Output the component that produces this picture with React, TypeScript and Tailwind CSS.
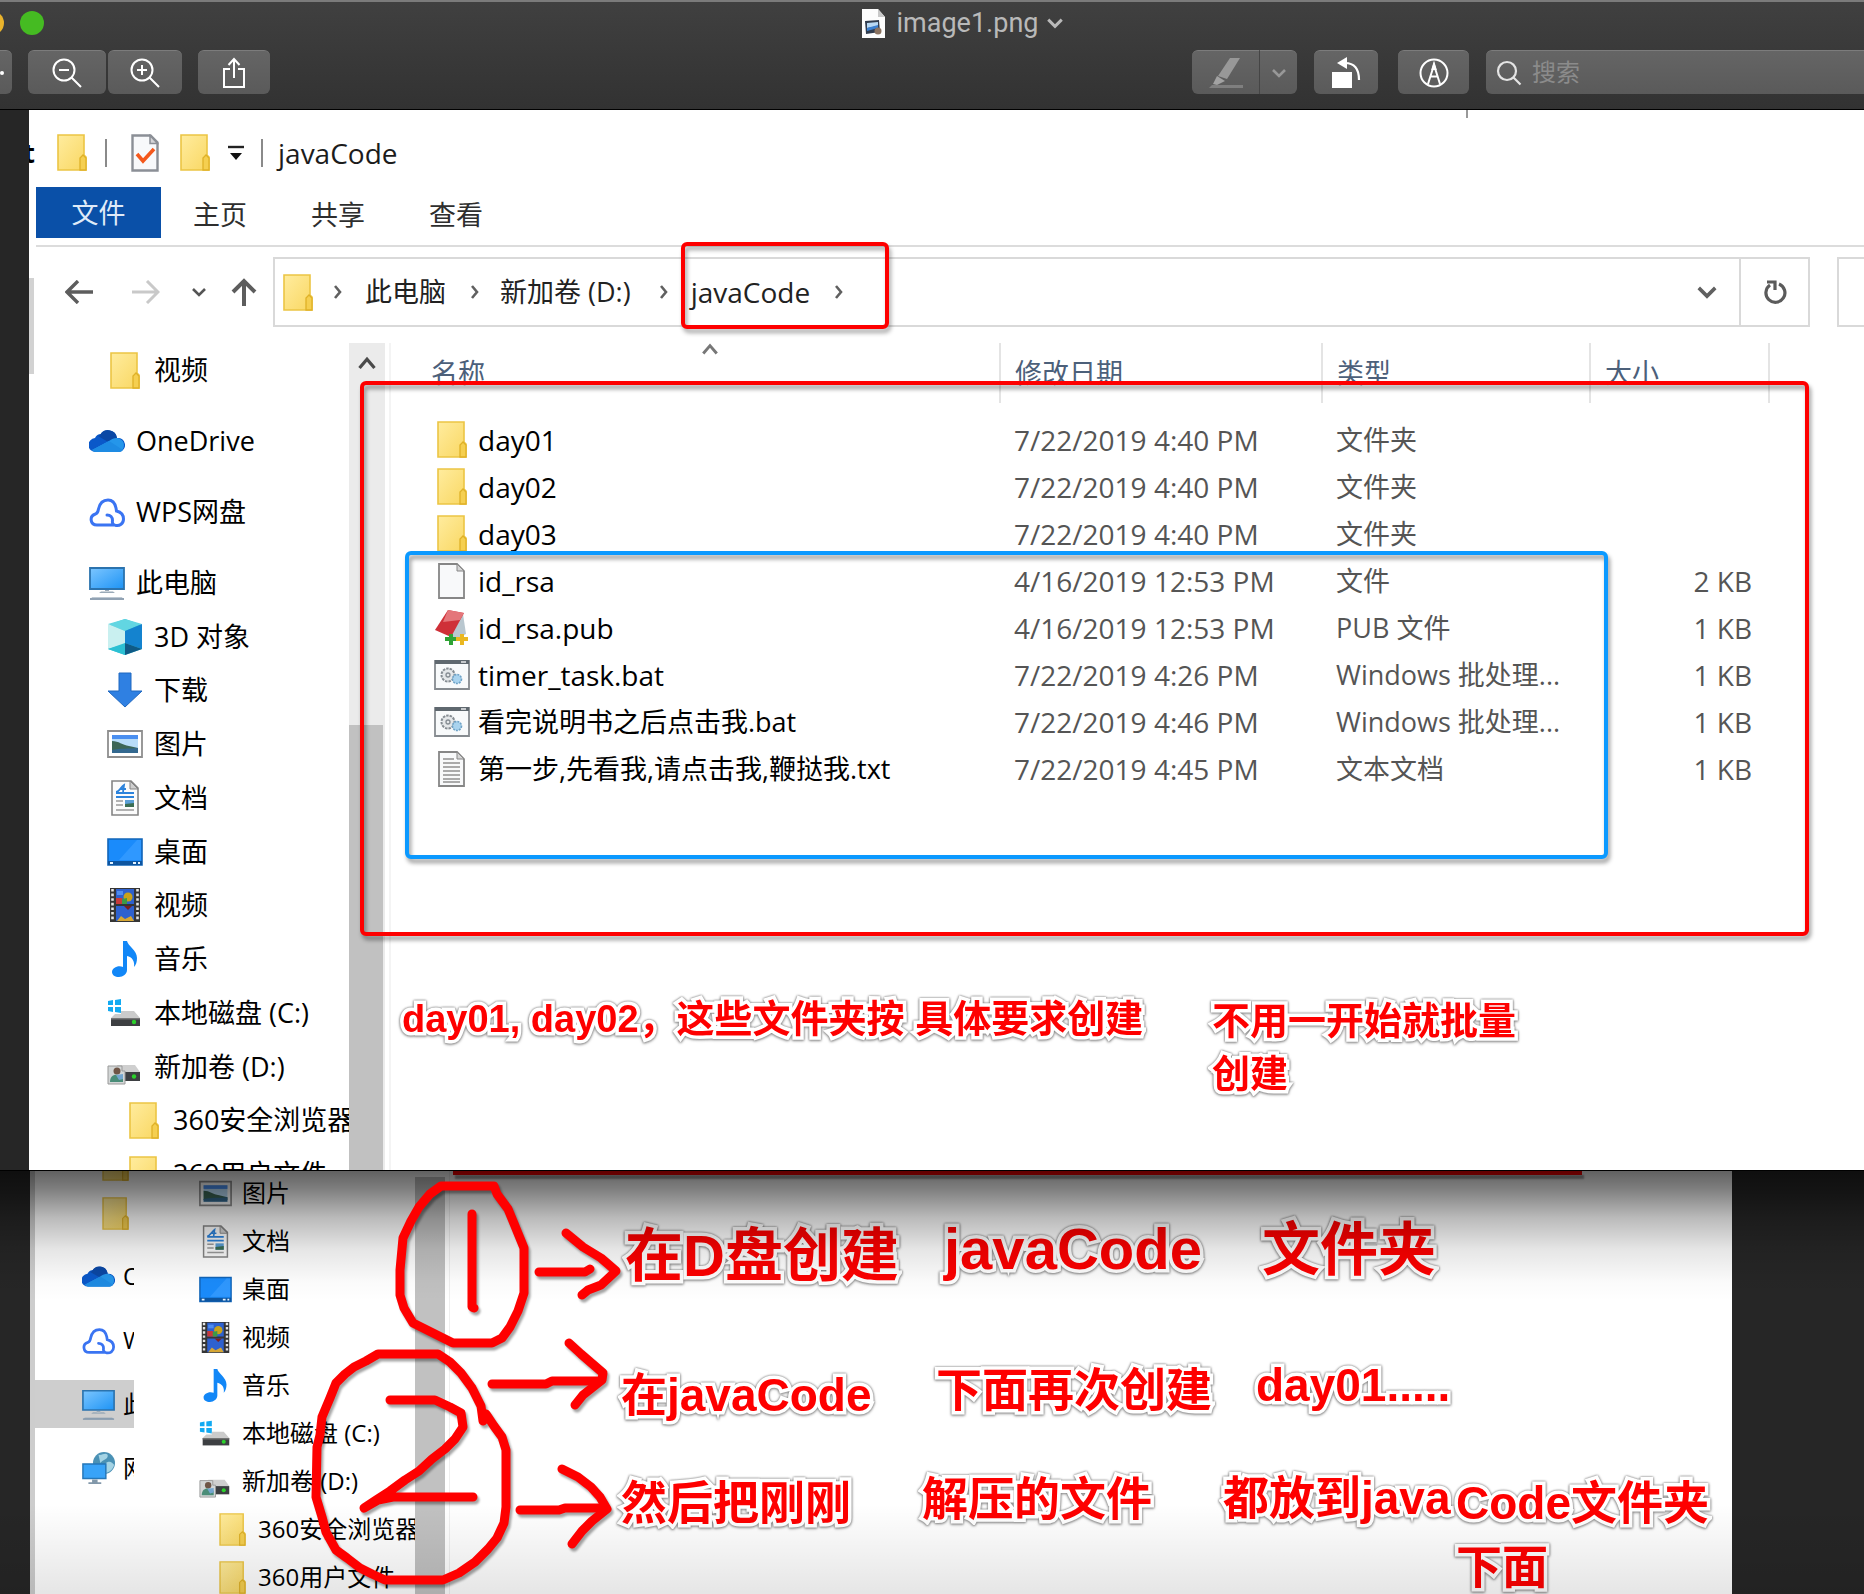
import React from "react";

type IconProps = { className?: string };

const Folder = ({ className = "w-[30px] h-[37px]" }: IconProps) => (
  <svg viewBox="0 0 30 37" className={className} aria-hidden="true">
    <defs>
      <linearGradient id="folderFill" x1="0" y1="0" x2="1" y2="1">
        <stop offset="0" stopColor="#ffec9e" />
        <stop offset="1" stopColor="#f9d762" />
      </linearGradient>
    </defs>
    <path d="M1 1h26v20l2 2v13H1z" fill="url(#folderFill)" stroke="#ecc544" strokeWidth="1.6" />
    <path d="M23 36V24l3-3 3 3v12z" fill="#f5cf50" stroke="#dfb127" strokeWidth="1.3" />
  </svg>
);

const CheckDoc = () => (
  <svg viewBox="0 0 28 38" className="h-[38px] w-7" aria-hidden="true">
    <path d="M1.5 1.5h18l7 7v28h-25z" fill="#f8f9fb" stroke="#8b8f96" strokeWidth="2.4" />
    <path d="M19 1.5v8h7.500z" fill="#d5d5d8" stroke="#8b8f96" strokeWidth="1.5" />
    <path d="M6 20l6 7 11-12" fill="none" stroke="#f4581c" strokeWidth="3.600" />
  </svg>
);

const OneDrive = ({ className = "w-9 h-9" }: IconProps) => (
  <svg viewBox="0 0 36 36" className={className} aria-hidden="true">
    <path d="M7 29a7 7 0 0 1-1-14 7 7 0 0 1 6-4 9 9 0 0 1 16 4 7 7 0 0 1 2 14z" fill="#0a58c9" />
    <path d="M11 12a9 9 0 0 1 17 3l-7 5-12-7z" fill="#0b48a5" />
    <path d="M3 27l17-9c4-3 8-4 11-2a7 7 0 0 1-1 13H8c-2 0-4-1-5-2z" fill="#2596ea" />
    <path d="M3 27l17-9 14 9c-1 1-2 2-4 2H8c-2 0-4-1-5-2z" fill="#1e8be3" />
  </svg>
);

const WpsCloud = ({ className = "w-9 h-9" }: IconProps) => (
  <svg viewBox="0 0 36 36" className={className} aria-hidden="true">
    <path
      d="M24 31H8c-7 0-8-9-1.500-11 2-.5 2.500-2 3-5C11 8 15 6 19 6s7 3 8 8l.500 3c4 1 7 4 7 8 0 5-4 7-7.500 6.500-3-.5-4-2.500-3.500-5 0-3-2-5.500-5.500-5.500"
      fill="none"
      stroke="#3a74f2"
      strokeWidth="3"
      strokeLinecap="round"
    />
  </svg>
);

const Computer = ({ className = "w-9 h-9" }: IconProps) => (
  <svg viewBox="0 0 36 36" className={className} aria-hidden="true">
    <defs>
      <linearGradient id="screenFill" x1="0" y1="0" x2="1" y2="1">
        <stop offset="0" stopColor="#7cc6ff" />
        <stop offset="1" stopColor="#1d93f5" />
      </linearGradient>
    </defs>
    <path d="M1 3h34v21H1z" fill="url(#screenFill)" stroke="#2b73ae" strokeWidth="1.800" />
    <path d="M10 28h16l-2-1.500H12zM16 25h4v2h-4z" fill="#9aaab8" />
    <path d="M1 34.500l2-2h30l2 2z" fill="#7e93a8" />
    <path d="M1 34h34" stroke="#91a2b3" strokeWidth="2" />
  </svg>
);

const Cube = () => (
  <svg viewBox="0 0 36 36" className="h-9 w-9" aria-hidden="true">
    <path d="M18 0l17 6v24l-17 6-17-6V6z" fill="#38c3d6" />
    <path d="M1 5l17-5 17 5-17 7z" fill="#62d6e2" />
    <path d="M1 5l17 7v13L1 30z" fill="#c9f0f0" />
    <path d="M18 12L35 5v25l-17-6z" fill="#1483cf" />
    <path d="M18 24l17 6-17 6z" fill="#0f5a86" />
    <path d="M18 24v12L1 30z" fill="#2cc0d3" />
  </svg>
);

const Download = () => (
  <svg viewBox="0 0 36 36" className="h-9 w-9" aria-hidden="true">
    <path d="M12 1h12v18h11L18 35 1 19h11z" fill="#2f80e2" stroke="#2068c0" strokeWidth="1" />
  </svg>
);

const Picture = ({ className = "w-9 h-9" }: IconProps) => (
  <svg viewBox="0 0 36 36" className={className} aria-hidden="true">
    <path d="M1 5h34v26H1z" fill="#fff" stroke="#8e8e8e" strokeWidth="1.800" />
    <path d="M5 9h26v18H5z" fill="#b8dcf8" />
    <path d="M5 9h26v4H5z" fill="#4a8ff0" />
    <path d="M5 15c7 0 10 4 17 5l9 2v3H5z" fill="#3c6656" />
    <path d="M5 24c8-2 16-1 26-2v5H5z" fill="#33688f" />
  </svg>
);

const Document = ({ className = "w-9 h-9" }: IconProps) => (
  <svg viewBox="0 0 36 36" className={className} aria-hidden="true">
    <path d="M5 1h19l7 7v27H5z" fill="#fbfbfb" stroke="#858585" strokeWidth="1.600" />
    <path d="M23 1v8h8z" fill="#cfcfcf" stroke="#858585" />
    <path d="M9 12c3 0 5-5 8-7l-1 7m-3-3h6" fill="none" stroke="#2c83dc" strokeWidth="1.800" />
    <path d="M9 13h18M9 17h18" stroke="#2c83dc" strokeWidth="2" />
    <path d="M9 21h7M9 25h7M9 30h18" stroke="#9b9b9b" strokeWidth="1.600" />
    <path d="M18 20h9v7h-9z" fill="#5b9fd6" />
    <path d="M18 24l9-1v4h-9z" fill="#3b6e53" />
  </svg>
);

const Desktop = ({ className = "w-9 h-9" }: IconProps) => (
  <svg viewBox="0 0 36 36" className={className} aria-hidden="true">
    <path d="M1 5h34v26H1z" fill="#1a8bfb" stroke="#1265b8" strokeWidth="1.600" />
    <path d="M12 26L30 6h4v20z" fill="#2f98ff" />
    <path d="M1 27h34v4H1z" fill="#0d55a0" />
    <path d="M3 29h3M26 29h3M31 29h2" stroke="#e5f3ff" strokeWidth="1.800" />
  </svg>
);

const Film = ({ className = "w-9 h-9" }: IconProps) => (
  <svg viewBox="0 0 36 36" className={className} aria-hidden="true">
    <path d="M3 1h30v34H3z" fill="#353535" />
    <path d="M5.500 2v32M30.500 2v32" stroke="#e6e6e6" strokeWidth="2.600" strokeDasharray="2.600 2" />
    <path d="M9 2h18v15H9zM9 19h18v15H9z" fill="#2e61cf" />
    <circle cx="21" cy="10" r="4.500" fill="#c9a21a" />
    <path d="M9 11h6l4 6H9z" fill="#c83a3a" />
    <path d="M15 12l5-1v6h-5z" fill="#3c9a48" />
    <path d="M17 19h8l-4 4z" fill="#7d1f1f" />
    <path d="M10 34l4-5 4 3 6-3 3 5z" fill="#d6a634" />
    <path d="M10 4h6v4h-6z" fill="#4f8df0" />
  </svg>
);

const Note = ({ className = "w-9 h-9" }: IconProps) => (
  <svg viewBox="0 0 36 36" className={className} aria-hidden="true">
    <path
      d="M16 0h4c1 5 10 9 10 17 0 4-1 7-3 9 1-6-2-10-7-11v14c0 4-4 7-8 7s-7-2-7-5c0-4 6-7 11-5z"
      fill="#1287f7"
    />
  </svg>
);

const DriveC = ({ className = "w-9 h-9" }: IconProps) => (
  <svg viewBox="0 0 36 36" className={className} aria-hidden="true">
    <path d="M1 6l5-1v5H1zM8 5l6-1v6H8zM1 12h5v5l-5-1zM8 12h6v6l-6-1z" fill="#12aaf2" />
    <path d="M14 16h13l6 7H4l4-4h6z" fill="#cbcbcb" />
    <path d="M4 23h29v8H4z" fill="#3d3f42" />
    <path d="M4 23h29v1.500H4z" fill="#777" />
    <circle cx="27" cy="27" r="2.200" fill="#2bd12b" />
  </svg>
);

const DriveD = ({ className = "w-9 h-9" }: IconProps) => (
  <svg viewBox="0 0 36 36" className={className} aria-hidden="true">
    <path d="M10 16h18l5 7H13z" fill="#cfcfcf" />
    <path d="M13 23h20v9H13z" fill="#3d3f42" />
    <circle cx="27" cy="27.500" r="2.200" fill="#2bd12b" />
    <path d="M1 17h14v5h3v13H1z" fill="#d3d6d6" stroke="#999" />
    <circle cx="10" cy="22" r="3.500" fill="#6f5546" />
    <path d="M3 33c0-6 4-8 8-7l5 2v5z" fill="#4a8d78" />
    <path d="M9 26l7-1v5l-4 1z" fill="#74a6cf" />
  </svg>
);

const Network = ({ className = "w-9 h-9" }: IconProps) => (
  <svg viewBox="0 0 36 36" className={className} aria-hidden="true">
    <circle cx="24" cy="12" r="12" fill="#4a91b5" />
    <path d="M18 3c4 1 7-3 10 0 1 5-5 5-8 9zM26 12c4-3 7-1 9 2-1 5-5 8-9 9z" fill="#a4d3e4" />
    <path d="M1 13h25v16H1z" fill="#38a3f8" stroke="#2677b8" strokeWidth="1.600" />
    <path d="M11 30h6v3h-6zM7 33h14v2H7z" fill="#8298aa" />
  </svg>
);

const BlankFile = () => (
  <svg viewBox="0 0 36 36" className="h-9 w-9" aria-hidden="true">
    <path d="M5 1h18l7 7v27H5z" fill="#f8f9fa" stroke="#868686" strokeWidth="1.800" />
    <path d="M23 1v7h7z" fill="#d6d6d6" stroke="#868686" />
  </svg>
);

const TextFile = () => (
  <svg viewBox="0 0 36 36" className="h-9 w-9" aria-hidden="true">
    <path d="M5 1h18l7 7v27H5z" fill="#f8f9fa" stroke="#868686" strokeWidth="1.800" />
    <path d="M23 1v7h7z" fill="#d6d6d6" stroke="#868686" />
    <path d="M9 8h11M9 12h17M9 16h17M9 20h17M9 24h17M9 28h17M9 31h17" stroke="#909090" strokeWidth="1.500" />
  </svg>
);

const PubFile = () => (
  <svg viewBox="0 0 36 36" className="h-9 w-9" aria-hidden="true">
    <path d="M29 4l3 20-10 5-8-5z" fill="#b9c7cf" />
    <path d="M14 0l16 3-13 24L1 20z" fill="#cf3038" />
    <path d="M14 0l16 3-4 7-17 2z" fill="#e4767a" />
    <path d="M15 24h4v3h3v4h-3v4h-4v-4h-4v-4h4z" fill="#2ea335" />
    <path d="M26 24h4v3h4v4h-4v4h-4v-4h-4v-4h4z" fill="#eab720" />
  </svg>
);

const BatFile = () => (
  <svg viewBox="0 0 36 36" className="h-9 w-9" aria-hidden="true">
    <path d="M1 4h34v28H1z" fill="#f8fafb" stroke="#868b90" strokeWidth="1.800" />
    <path d="M1 3h34v4H1z" fill="#5f686f" />
    <path d="M27 5h5" stroke="#fff" strokeWidth="1.300" />
    <circle cx="14" cy="18" r="6.500" fill="#e4e7e9" stroke="#858c92" strokeWidth="2" strokeDasharray="2.500 1" />
    <circle cx="14" cy="18" r="2" fill="none" stroke="#858c92" strokeWidth="1.300" />
    <circle cx="23" cy="22" r="4.500" fill="#a9d3ee" stroke="#6ea2c6" strokeWidth="1.600" strokeDasharray="2 1" />
  </svg>
);

const Chevron = ({ d, className = "w-4 h-4" }: { d: "up" | "down" | "right"; className?: string }) => {
  const paths = { up: "M2 12l6-7 6 7", down: "M2 5l6 6 6-6", right: "M6 2l5 6-5 6" };
  return (
    <svg viewBox="0 0 16 16" className={className} aria-hidden="true">
      <path d={paths[d]} fill="none" stroke="currentColor" strokeWidth="2.600" />
    </svg>
  );
};

const toolButton =
  "flex h-11 shrink-0 items-center justify-center rounded-md border-t border-[#7c7c7c] bg-linear-to-b from-[#656565] to-[#5a5a5a]";

const ZoomGlyph = ({ plus = false }: { plus?: boolean }) => (
  <svg viewBox="0 0 30 30" className="h-[30px] w-[30px]" fill="none" stroke="#fff" strokeWidth="2" aria-hidden="true">
    <circle cx="12" cy="12" r="10.500" />
    <path d="M19.500 19.500L29 29M7 12h10" />
    {plus && <path d="M12 7v10" />}
  </svg>
);

function TitleBar() {
  return (
    <header className="flex h-[110px] shrink-0 flex-col overflow-hidden border-t-2 border-b border-t-[#7b7b7b] border-b-black bg-linear-to-b from-[#404040] to-[#323232] font-[Roboto,'Noto_Sans_CJK_SC',sans-serif]">
      <div className="relative flex h-[42px] items-center justify-center pl-[62px]">
        <div className="absolute left-[-20px] flex gap-4">
          <button type="button" aria-label="最小化" className="h-6 w-6 rounded-full bg-[#e9b32c]" />
          <button type="button" aria-label="缩放" className="h-6 w-6 rounded-full bg-[#45bb22]" />
        </div>
        <svg viewBox="0 0 23 29" className="mr-3 h-[29px] w-[23px]" aria-hidden="true">
          <path d="M0 0h16l7 8v21H0z" fill="#fdfdfd" />
          <path d="M16 0v8h7z" fill="#c9c9c9" />
          <path d="M3 12l14-1 1 12-14 2z" fill="#303c4e" />
          <path d="M5 14l11-1v4L5 19z" fill="#b7d8f4" />
          <path d="M5 19l11-3v3L5 22z" fill="#3a7fd0" />
          <circle cx="16" cy="22" r="3.500" fill="#8a7260" />
        </svg>
        <h1 className="text-[27px] leading-8 text-[#b9b9b9]">image1.png</h1>
        <Chevron d="down" className="ml-2 h-[18px] w-[18px] text-[#b9b9b9]" />
      </div>
      <div className="flex pt-1.5">
        <button type="button" aria-label="导航" className={`${toolButton} w-3 rounded-l-none`}>
          <span className="mr-2 h-1 w-1 rounded-full bg-white" />
        </button>
        <button type="button" aria-label="缩小" className={`${toolButton} ml-4 w-[78px]`}>
          <ZoomGlyph />
        </button>
        <button type="button" aria-label="放大" className={`${toolButton} ml-0.5 w-[74px]`}>
          <ZoomGlyph plus />
        </button>
        <button type="button" aria-label="共享" className={`${toolButton} ml-4 w-[72px]`}>
          <svg viewBox="0 0 24 32" className="h-8 w-6" fill="none" stroke="#fff" strokeWidth="2" aria-hidden="true">
            <path d="M8 12H2v18h20V12h-6M12 21V2M6.500 8L12 2l5.500 6" />
          </svg>
        </button>
        <div className="grow" />
        <button type="button" aria-label="高亮" disabled className={`${toolButton} w-[67px] rounded-r-none`}>
          <svg viewBox="0 0 34 32" className="h-8 w-[34px]" aria-hidden="true">
            <path d="M21 1h10L18 22l-9-3z" fill="#989898" />
            <path d="M8 19l8 5-8 4-4-1z" fill="#a2a2a2" />
            <path d="M3 28h31v3H0z" fill="#7f7f7f" />
          </svg>
        </button>
        <button type="button" aria-label="高亮颜色" className={`${toolButton} w-[38px] rounded-l-none border-l border-l-[#454545] text-[#989898]`}>
          <Chevron d="down" />
        </button>
        <button type="button" aria-label="旋转" className={`${toolButton} ml-[17px] w-16`}>
          <svg viewBox="0 0 32 32" className="h-8 w-8" aria-hidden="true">
            <path d="M2 15h20v16H2z" fill="#fff" />
            <path d="M15 6c9 0 14 6 14 17" fill="none" stroke="#fff" strokeWidth="2.200" />
            <path d="M7 6l10-6v12z" fill="#fff" />
          </svg>
        </button>
        <button type="button" aria-label="标记" className={`${toolButton} ml-5 w-[71px]`}>
          <svg viewBox="0 0 30 30" className="h-[30px] w-[30px]" fill="none" stroke="#fff" strokeWidth="2" aria-hidden="true">
            <circle cx="15" cy="15" r="13.500" />
            <path d="M9 26l6-19 6 19M11.500 18.500h7" />
            <path d="M13.500 11L15 6l1.500 5z" fill="#fff" />
          </svg>
        </button>
        <label className={`${toolButton} ml-[17px] w-[378px] rounded-r-none`}>
          <svg viewBox="0 0 26 26" className="ml-2.5 h-[26px] w-[26px] shrink-0" fill="none" stroke="#e4e4e4" strokeWidth="2.200" aria-hidden="true">
            <circle cx="11" cy="11" r="9" />
            <path d="M17.500 17.500l7 7" />
          </svg>
          <input type="search" aria-label="搜索" placeholder="搜索" className="ml-2.5 w-full bg-transparent text-2xl leading-8 text-white outline-none placeholder:text-[#8b8b8b]" />
        </label>
      </div>
    </header>
  );
}

function QuickAccess() {
  return (
    <div className="flex h-[77px] items-center pt-2">
      <span className="flex w-1.5 justify-end overflow-hidden text-[27px] font-bold leading-8">t</span>
      <Folder className="ml-[22px] h-[37px] w-[30px]" />
      <span className="ml-[18px] h-7 w-0.5 bg-[#8a8a8a]" />
      <span className="ml-6"><CheckDoc /></span>
      <Folder className="ml-[21px] h-[37px] w-[30px]" />
      <svg viewBox="0 0 18 16" className="ml-[17px] h-4 w-[18px]" aria-hidden="true">
        <path d="M1 2h16" stroke="#222" strokeWidth="2.400" />
        <path d="M3 8h12l-6 7z" fill="#111" />
      </svg>
      <span className="ml-4 h-7 w-0.5 bg-[#8a8a8a]" />
      <span className="ml-[15px] text-[28px] leading-8 text-[#1c1c1c]">javaCode</span>
    </div>
  );
}

function Ribbon() {
  return (
    <nav className="ml-[7px] flex h-[60px] items-start border-b-2 border-[#dcdcdc] text-[27px] leading-8 text-[#2e2e2e]">
      <button type="button" className="h-[51px] w-[125px] bg-[#0a50a8] text-[#dfeaf8]">文件</button>
      <button type="button" className="h-14 w-[118px]">主页</button>
      <button type="button" className="h-14 w-[118px]">共享</button>
      <button type="button" className="h-14 w-[118px]">查看</button>
    </nav>
  );
}

const crumb = "shrink-0 leading-8 text-[#222]";

function AddressBar() {
  return (
    <div className="flex pt-2.5">
      <div className="flex w-[244px] shrink-0 items-center pl-9 text-[#555]">
        <button type="button" aria-label="后退">
          <svg viewBox="0 0 28 24" className="h-6 w-7" fill="none" stroke="#5d5d5d" strokeWidth="3.400" aria-hidden="true">
            <path d="M13 1L2 12l11 11M2 12h26" />
          </svg>
        </button>
        <button type="button" aria-label="前进" disabled className="ml-[39px]">
          <svg viewBox="0 0 28 24" className="h-6 w-7" fill="none" stroke="#c9c9c9" strokeWidth="3" aria-hidden="true">
            <path d="M15 1l11 11-11 11M26 12H0" />
          </svg>
        </button>
        <button type="button" aria-label="最近位置" className="ml-[31px]">
          <Chevron d="down" />
        </button>
        <button type="button" aria-label="上移" className="ml-6">
          <svg viewBox="0 0 26 28" className="h-7 w-[26px]" fill="none" stroke="#5d5d5d" strokeWidth="4" aria-hidden="true">
            <path d="M2 14L13 3l11 11M13 3v25" />
          </svg>
        </button>
      </div>
      <div className="relative flex h-[70px] grow items-center border-2 border-[#d9d9d9] text-[#606060]">
        <Folder className="ml-2 h-[37px] w-[30px] shrink-0" />
        <Chevron d="right" className="ml-4 h-4 w-4 shrink-0" />
        <button type="button" className={`${crumb} ml-5 text-[27px]`}>此电脑</button>
        <Chevron d="right" className="ml-5 h-4 w-4 shrink-0" />
        <button type="button" className={`${crumb} ml-[18px] text-[27px]`}>新加卷 (D:)</button>
        <Chevron d="right" className="ml-6 h-4 w-4 shrink-0" />
        <button type="button" className={`${crumb} ml-5 text-[28px]`}>javaCode</button>
        <Chevron d="right" className="ml-5 h-4 w-4 shrink-0" />
        <span className="grow" />
        <button type="button" aria-label="历史记录" className="mr-[21px]">
          <Chevron d="down" className="h-[22px] w-[22px]" />
        </button>
        <button type="button" aria-label="刷新" className="flex h-full w-[69px] items-center justify-center border-l-2 border-[#d9d9d9]">
          <svg viewBox="0 0 24 26" className="h-[26px] w-6" fill="none" stroke="#5b5b5b" strokeWidth="3.200" aria-hidden="true">
            <path d="M16 5a9.500 9.500 0 1 1-9 1" />
            <path d="M4 3h8v8" />
          </svg>
        </button>
        <div className="pointer-events-none absolute left-[406px] top-[-17px] h-[87px] w-[208px] rounded-md border-4 border-[#fe0000] [filter:drop-shadow(2px_4px_2px_rgba(0,0,0,0.35))]" />
      </div>
      <input aria-label="搜索 javaCode" className="ml-[27px] h-[70px] w-[27px] shrink-0 border-2 border-r-0 border-[#d9d9d9] outline-none" />
    </div>
  );
}

type Item = { icon: React.ReactNode; label: string; level: 1 | 2 | 3 };

function TreeRow({ icon, label, level }: Item) {
  const pad = level === 1 ? "pl-[60px]" : level === 2 ? "pl-[78px]" : "pl-[97px]";
  return (
    <a href="#" className={`flex min-h-0 items-center whitespace-nowrap text-[27px] leading-8 text-black ${pad}`}>
      <span className="flex w-9 shrink-0 justify-center">{icon}</span>
      <span className="ml-[11px]">{label}</span>
    </a>
  );
}

const treeTop: Item[] = [
  { icon: <Folder />, label: "视频", level: 2 },
  { icon: <OneDrive />, label: "OneDrive", level: 1 },
  { icon: <WpsCloud />, label: "WPS网盘", level: 1 },
];

const treePc: Item[] = [
  { icon: <Computer />, label: "此电脑", level: 1 },
  { icon: <Cube />, label: "3D 对象", level: 2 },
  { icon: <Download />, label: "下载", level: 2 },
  { icon: <Picture />, label: "图片", level: 2 },
  { icon: <Document />, label: "文档", level: 2 },
  { icon: <Desktop />, label: "桌面", level: 2 },
  { icon: <Film />, label: "视频", level: 2 },
  { icon: <Note />, label: "音乐", level: 2 },
  { icon: <DriveC />, label: "本地磁盘 (C:)", level: 2 },
  { icon: <DriveD />, label: "新加卷 (D:)", level: 2 },
  { icon: <Folder />, label: "360安全浏览器", level: 3 },
  { icon: <Folder />, label: "360用户文件", level: 3 },
];

function Tree() {
  return (
    <nav className="w-80 shrink-0 overflow-hidden">
      <div className="flex flex-col gap-[17px]">
        {treeTop.map((it) => (
          <div key={it.label} className="grid h-[54px]"><TreeRow {...it} /></div>
        ))}
      </div>
      <div className="mt-[17px] grid h-[645px] auto-rows-fr">
        {treePc.map((it) => (
          <TreeRow key={it.label} {...it} />
        ))}
      </div>
    </nav>
  );
}

const files = [
  { icon: <Folder />, name: "day01", date: "7/22/2019 4:40 PM", type: "文件夹", size: "" },
  { icon: <Folder />, name: "day02", date: "7/22/2019 4:40 PM", type: "文件夹", size: "" },
  { icon: <Folder />, name: "day03", date: "7/22/2019 4:40 PM", type: "文件夹", size: "" },
  { icon: <BlankFile />, name: "id_rsa", date: "4/16/2019 12:53 PM", type: "文件", size: "2 KB" },
  { icon: <PubFile />, name: "id_rsa.pub", date: "4/16/2019 12:53 PM", type: "PUB 文件", size: "1 KB" },
  { icon: <BatFile />, name: "timer_task.bat", date: "7/22/2019 4:26 PM", type: "Windows 批处理...", size: "1 KB" },
  { icon: <BatFile />, name: "看完说明书之后点击我.bat", date: "7/22/2019 4:46 PM", type: "Windows 批处理...", size: "1 KB", cjk: true },
  { icon: <TextFile />, name: "第一步,先看我,请点击我,鞭挞我.txt", date: "7/22/2019 4:45 PM", type: "文本文档", size: "1 KB", cjk: true },
];

function FileTable() {
  const th = "border-r-2 border-[#e4e4e4] pl-3.5 text-left font-normal";
  return (
    <table className="w-full table-fixed border-collapse whitespace-nowrap text-[27px] leading-8">
      <colgroup>
        <col className="w-[609px]" />
        <col className="w-[322px]" />
        <col className="w-[268px]" />
        <col className="w-[179px]" />
        <col />
      </colgroup>
      <thead>
        <tr className="h-[60px] text-[#4c607a]">
          <th className="relative border-r-2 border-[#e4e4e4] pl-10 text-left font-normal">
            名称
            <Chevron d="up" className="absolute left-[310px] top-[-3px] h-[18px] w-[18px] text-[#777]" />
          </th>
          <th className={th}>修改日期</th>
          <th className={th}>类型</th>
          <th className={th}>大小</th>
          <th />
        </tr>
      </thead>
      <tbody className="before:block before:h-[13px]">
        {files.map((f) => (
          <tr key={f.name} className="h-[47px] text-[#555]">
            <td className="pl-[43px]">
              <span className="flex items-center text-black">
                <span className="flex w-9 shrink-0 justify-center">{f.icon}</span>
                <span className={f.cjk ? "ml-2" : "ml-2 text-[28px]"}>{f.name}</span>
              </span>
            </td>
            <td className="pl-3.5 text-[28px]">{f.date}</td>
            <td className="pl-3.5">{f.type}</td>
            <td className="pr-[17px] text-right text-[28px]">{f.size}</td>
            <td />
          </tr>
        ))}
      </tbody>
    </table>
  );
}

const noteText =
  "absolute font-bold text-[#fe0000] font-['Liberation_Sans','Noto_Sans_CJK_SC',sans-serif] [paint-order:stroke_fill] [-webkit-text-stroke:7px_white] [filter:drop-shadow(0_0_1px_#777)_drop-shadow(0_1px_1px_#aaa)]";

function Explorer() {
  return (
    <section className="relative ml-[29px] h-[1060px] shrink-0 overflow-hidden bg-white">
      <QuickAccess />
      <Ribbon />
      <AddressBar />
      <div className="mt-4 flex">
        <Tree />
        <div className="flex h-[827px] w-9 shrink-0 flex-col bg-[#ebebeb]">
          <div className="flex h-[382px] justify-center pt-2.5 text-[#4a4a4a]">
            <Chevron d="up" className="h-5 w-5" />
          </div>
          <div className="mr-0.5 grow bg-[#c1c1c1]" />
        </div>
        <main className="ml-1 grow border-l-2 border-[#f4f4f4]">
          <FileTable />
        </main>
      </div>
      <div className="absolute left-0 top-[168px] h-24 w-[5px] bg-[#d2d2d2]" />
      <div className="absolute left-[1437px] top-0 h-2 w-0.5 bg-[#999]" />
      <div className="pointer-events-none absolute left-[331px] right-[55px] top-[271px] h-[555px] rounded-md border-4 border-[#fe0000] [filter:drop-shadow(2px_4px_2px_rgba(0,0,0,0.4))]" />
      <div className="pointer-events-none absolute left-[376px] right-[256px] top-[441px] h-[308px] rounded-md border-4 border-[#0b99ff] [filter:drop-shadow(2px_4px_2px_rgba(0,0,0,0.4))]" />
      <p className={`${noteText} left-[373px] top-[890px] whitespace-nowrap text-[38px] leading-none`}>
        day01, day02，这些文件夹按 具体要求创建
      </p>
      <p className={`${noteText} left-[1183px] top-[885px] w-[310px] text-[38px] leading-[53px]`}>
        不用一开始就批量创建
      </p>
    </section>
  );
}

const small = "w-[33px] h-[33px]";
const smallFolder = "w-[27px] h-[33px]";

const placesNarrow = [
  { icon: <OneDrive className={small} />, label: "OneDrive", on: false },
  { icon: <WpsCloud className={small} />, label: "WPS网盘", on: false },
  { icon: <Computer className={small} />, label: "此电脑", on: true },
  { icon: <Network className={small} />, label: "网络", on: false },
];

const placesWide = [
  { icon: <Picture className={small} />, label: "图片", deep: false },
  { icon: <Document className={small} />, label: "文档", deep: false },
  { icon: <Desktop className={small} />, label: "桌面", deep: false },
  { icon: <Film className={small} />, label: "视频", deep: false },
  { icon: <Note className={small} />, label: "音乐", deep: false },
  { icon: <DriveC className={small} />, label: "本地磁盘 (C:)", deep: false },
  { icon: <DriveD className={small} />, label: "新加卷 (D:)", deep: false },
  { icon: <Folder className={smallFolder} />, label: "360安全浏览器", deep: true },
  { icon: <Folder className={smallFolder} />, label: "360用户文件", deep: true },
];

const steps = [
  { text: "在D盘创建", cls: "left-[595px] top-[56px] text-[58px] leading-none whitespace-nowrap" },
  { text: "javaCode", cls: "left-[914px] top-[49px] text-[58px] leading-none whitespace-nowrap" },
  { text: "文件夹", cls: "left-[1232px] top-[50px] text-[58px] leading-none whitespace-nowrap" },
  { text: "在javaCode", cls: "left-[591px] top-[201px] text-[46px] leading-none whitespace-nowrap" },
  { text: "下面再次创建", cls: "left-[906px] top-[196px] text-[46px] leading-none whitespace-nowrap" },
  { text: "day01.....", cls: "left-[1226px] top-[191px] text-[46px] leading-none whitespace-nowrap" },
  { text: "然后把刚刚", cls: "left-[591px] top-[309px] text-[46px] leading-none whitespace-nowrap" },
  { text: "解压的文件", cls: "left-[892px] top-[305px] text-[46px] leading-none whitespace-nowrap" },
  { text: "都放到java", cls: "left-[1193px] top-[304px] text-[46px] leading-none whitespace-nowrap" },
  { text: "Code文件夹下面", cls: "left-[1426px] top-[300px] w-[262px] text-[46px] leading-[64px]" },
];

function Strokes() {
  return (
    <svg
      viewBox="0 1171 640 423"
      className="pointer-events-none absolute left-0 top-0 h-[423px] w-[640px] [filter:drop-shadow(2px_3px_1px_rgba(0,0,0,0.35))]"
      fill="none"
      stroke="#fe0000"
      strokeWidth="9"
      strokeLinecap="round"
      strokeLinejoin="round"
      aria-hidden="true"
    >
      <path d="M441 1186H494L497 1194L508 1209L515 1226L524 1248V1293L518 1311L510 1327L502 1338L492 1343H453L437 1335L413 1323L404 1308L400 1295V1270L403 1238L411 1221L419 1207L430 1194Z" />
      <path d="M472 1214V1307L474 1308" />
      <path d="M539 1272H585L590 1269" />
      <path d="M566 1233L583 1247L601 1258L616 1271L601 1285L588 1290L582 1295" />
      <path d="M492 1384H546L552 1381H600" />
      <path d="M569 1343L581 1354L603 1373L602 1380L583 1395L575 1405" />
      <path d="M520 1510H559L565 1508H605" />
      <path d="M562 1469L578 1477L591 1487L600 1497L607 1509L592 1521L582 1531L572 1544" />
      <path d="M483 1421L481 1406L472 1388L461 1373L450 1362L438 1354H378L366 1361L354 1367L345 1374L336 1383L330 1398L322 1417L320 1435L317 1447L316 1497L322 1517L326 1532L336 1550L347 1558L360 1568L372 1574L385 1580H443L459 1573L475 1562L488 1549L497 1538L504 1523L506 1507V1450L502 1437L494 1426L486 1414" />
      <path d="M390 1400H435L450 1407L461 1413L463 1427L455 1439L445 1449L432 1459L419 1471L405 1480L390 1491L376 1500L364 1508L378 1500L393 1497H473" />
    </svg>
  );
}

function StepsPage() {
  return (
    <section className="relative h-[423px] grow overflow-hidden border-t border-black bg-[#262626]">
      <div className="relative ml-[30px] mr-[132px] flex h-full overflow-hidden border-l-[5px] border-[#cdcdcd] bg-white text-2xl leading-8 text-black">
        <div className="w-[99px] shrink-0 overflow-hidden">
          <div className="h-[103px] overflow-hidden pl-[67px]">
            <Folder className="mt-[-23px] h-[33px] w-[27px]" />
            <Folder className="mt-4 h-[33px] w-[27px]" />
          </div>
          <div className="mt-[-22px] flex flex-col gap-4">
            {placesNarrow.map((p) => (
              <a
                href="#"
                key={p.label}
                className={`flex h-12 items-center whitespace-nowrap pl-[47px] ${p.on ? "bg-[#cecece]" : ""}`}
              >
                <span className="shrink-0">{p.icon}</span>
                <span className="ml-2">{p.label}</span>
              </a>
            ))}
          </div>
        </div>
        <div className="mt-[-2px] w-[281px] shrink-0 overflow-hidden">
          {placesWide.map((p) => (
            <a href="#" key={p.label} className={`flex h-12 items-center whitespace-nowrap ${p.deep ? "pl-[85px]" : "pl-[65px]"}`}>
              <span className="shrink-0">{p.icon}</span>
              <span className={p.deep ? "ml-3" : "ml-2.5"}>{p.label}</span>
            </a>
          ))}
        </div>
        <div className="mt-1.5 w-[30px] shrink-0 bg-[#c1c1c1]" />
        <div className="ml-1 w-px bg-[#eee]" />
      </div>
      <div className="absolute left-[453px] right-[282px] top-0 h-1 bg-[#fe0000] shadow-[2px_4px_2px_rgba(0,0,0,0.35)]" />
      <div className="absolute inset-y-0 left-[30px] right-0">
        {steps.map((s) => (
          <p key={s.text} className={`${noteText} ${s.cls}`}>
            {s.text}
          </p>
        ))}
      </div>
      <div className="pointer-events-none absolute inset-x-0 top-0 h-[130px] bg-[linear-gradient(to_bottom,rgba(0,0,0,0.62)_0%,rgba(0,0,0,0.5)_14%,rgba(0,0,0,0.27)_36%,rgba(0,0,0,0.1)_60%,rgba(0,0,0,0.02)_85%,transparent_100%)]" />
      <div className="pointer-events-none absolute inset-x-0 bottom-0 h-[90px] bg-linear-to-b from-transparent to-black/10" />
      <Strokes />
    </section>
  );
}

export default function App() {
  return (
    <div className="flex min-h-screen flex-col overflow-hidden bg-[#262626] font-['Open_Sans','Noto_Sans_CJK_SC',sans-serif]">
      <TitleBar />
      <Explorer />
      <StepsPage />
    </div>
  );
}
